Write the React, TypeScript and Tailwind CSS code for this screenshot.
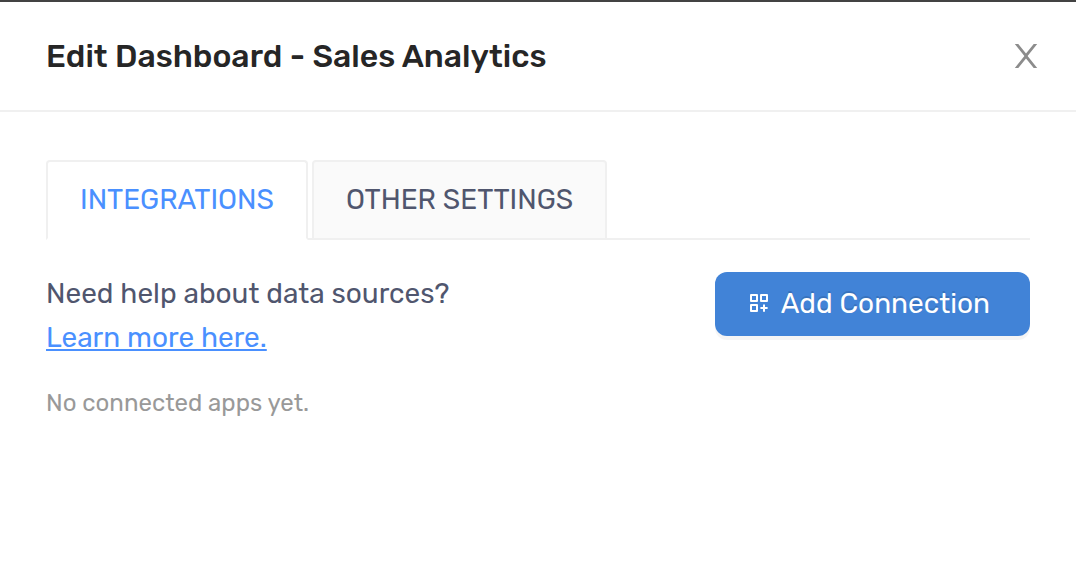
import { useState } from "react";
import { clsx } from "clsx";

type TabKey = "integrations" | "settings";

const tabs: { key: TabKey; label: string }[] = [
  { key: "integrations", label: "INTEGRATIONS" },
  { key: "settings", label: "OTHER SETTINGS" },
];

const AddAppIcon = () => (
  <svg width="28" height="28" viewBox="0 0 28 28" fill="none" stroke="currentColor" strokeWidth="2" strokeLinejoin="round" aria-hidden="true">
    <rect x="6" y="5" width="6" height="6" />
    <rect x="16" y="5" width="6" height="6" />
    <rect x="6" y="15" width="6" height="6" />
    <path d="M19 14.5v7.2M15.4 18h7.2" />
  </svg>
);

const CloseIcon = () => (
  <svg width="36" height="36" viewBox="0 0 36 36" fill="currentColor" aria-hidden="true">
    <path d="M6.8 6h3.5L18 15.5 25.7 6h3.5l-9.6 12 9.6 12h-3.5L18 20.5 10.3 30H6.8l9.6-12z" />
  </svg>
);

const App = () => {
  const [active, setActive] = useState<TabKey>("integrations");

  return (
    <div className="min-h-screen border-t-2 border-[#434343] bg-white font-['Rubik',Roboto,sans-serif]">
      <header className="flex items-center justify-between border-b-2 border-[#f0f0f0] py-8 pr-8 pl-[46px]">
        <h1 className="text-[32px] leading-[44px] font-medium text-[#262626]">
          Edit Dashboard - Sales Analytics
        </h1>
        <button type="button" aria-label="Close" className="text-[#8c8c8c]">
          <CloseIcon />
        </button>
      </header>

      <main className="px-[46px] pt-12">
        <div role="tablist" className="flex">
          {tabs.map((tab) => (
            <div key={tab.key} className="flex">
              <button
                type="button"
                role="tab"
                aria-selected={active === tab.key}
                onClick={() => setActive(tab.key)}
                className={clsx(
                  "h-20 rounded-t border-2 border-[#f0f0f0] px-8 text-[28px] leading-[44px]",
                  active === tab.key
                    ? "border-b-white bg-white text-[#4a90ff]"
                    : "bg-[#fafafa] text-[#50566e]"
                )}
              >
                {tab.label}
              </button>
              <div className="w-1 border-b-2 border-[#f0f0f0]" />
            </div>
          ))}
          <div className="flex-1 border-b-2 border-[#f0f0f0]" />
        </div>

        <div className="flex items-start justify-between pt-8">
          <div className="text-[28px] leading-[44px] text-[#50566e]">
            <p>Need help about data sources?</p>
            <a href="#" className="text-[#4a90ff] underline">
              Learn more here.
            </a>
          </div>
          <button
            type="button"
            className="flex h-16 items-center gap-2 rounded-xl bg-[#4183d7] pr-10 pl-[30px] text-[28px] text-white shadow-[0_4px_0_rgba(0,0,0,0.04)] text-shadow-[0_-2px_0_rgba(0,0,0,0.12)]"
          >
            <AddAppIcon />
            Add Connection
          </button>
        </div>

        <p className="mt-6 text-2xl leading-[38px] text-[#999999]">No connected apps yet.</p>
      </main>
    </div>
  );
};

export default App;
